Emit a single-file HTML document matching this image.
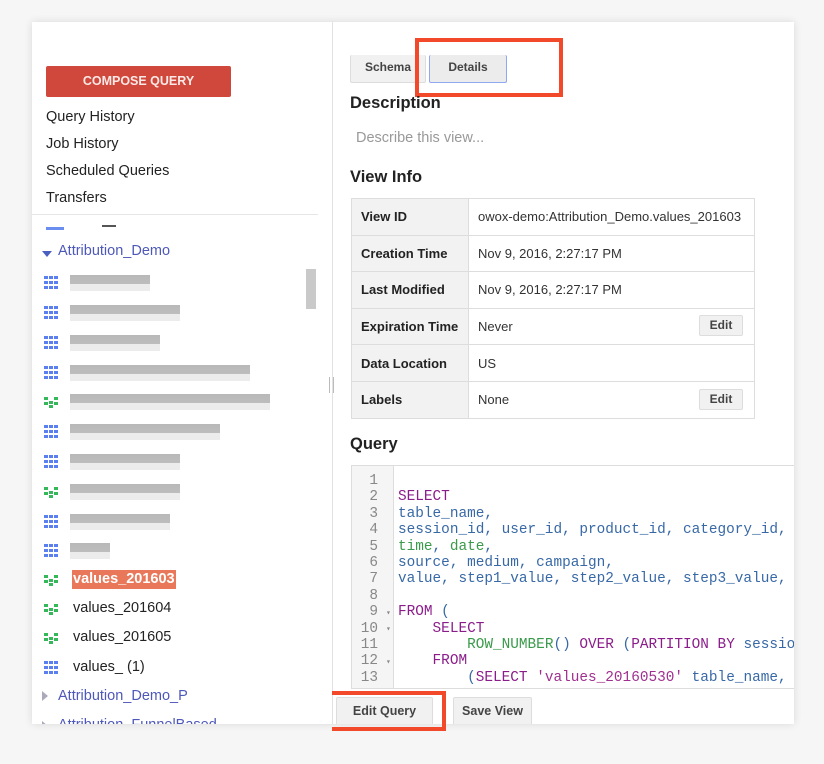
<!DOCTYPE html>
<html><head><style>
*{margin:0;padding:0;box-sizing:border-box}
body{width:824px;height:764px;background:#f6f6f6;font-family:"Liberation Sans",sans-serif;position:relative;overflow:hidden}
.card{position:absolute;left:32px;top:22px;width:762px;height:702px;background:#fff;box-shadow:0 0 8px rgba(0,0,0,.12);overflow:hidden}
.a{position:absolute;white-space:nowrap}
.btn{position:absolute;background:#f1f1f1;border:1px solid #ddd;border-radius:2px;font-weight:bold;font-size:12px;color:#444;text-align:center}
.nav{position:absolute;left:14px;font-size:14.5px;color:#222}
.row{position:absolute;left:12px;height:20px;font-size:14.5px;color:#222;white-space:nowrap}
.ic{position:absolute;left:0;top:3px;width:16px;height:13px}
.blur{position:absolute;left:26px;top:2px;height:16px;background:linear-gradient(#b8b8b8 0,#bdbdbd 55%,#ececec 55%)}
table{border-collapse:collapse;position:absolute;left:319px;top:176px;width:404px;font-size:13px}
td{border:1px solid #ddd;height:36.6px;padding-left:9px;color:#333}
td.l{background:#f2f2f2;font-weight:bold;width:117px;color:#222}
.code{position:absolute;left:319px;top:443px;width:450px;height:224px;border:1px solid #ddd;font-family:"Liberation Mono",monospace;font-size:14.4px;line-height:16.4px;overflow:hidden}
.gut{position:absolute;left:0;top:0;width:42px;height:100%;background:#f5f5f5;border-right:1px solid #ddd;color:#888;text-align:right;padding:7px 15px 0 0}
.src{position:absolute;left:46px;top:7px;white-space:pre;color:#3869a6}
.k{color:#8b1d8b}.g{color:#3a9a4a}.s{color:#a0308f}
</style></head><body>
<div class="card">
 <div class="a" style="left:14px;top:44px;width:185px;height:31px;background:#d0483b;border-radius:2px;color:#fbe9e7;font-weight:bold;font-size:12.5px;text-align:center;line-height:31px">COMPOSE QUERY</div>
 <div class="nav" style="top:87px">Query History</div>
 <div class="nav" style="top:114px">Job History</div>
 <div class="nav" style="top:141px">Scheduled Queries</div>
 <div class="nav" style="top:168px">Transfers</div>
 <div class="a" style="left:0;top:192px;width:286px;height:1px;background:#e6e6e6"></div>
 <div class="a" style="left:14px;top:205px;width:18px;height:3px;background:#6a8ef0"></div>
 <div class="a" style="left:70px;top:203px;width:14px;height:2px;background:#555"></div>
 <div class="a" style="left:10px;top:229px;width:0;height:0;border-left:5px solid transparent;border-right:5px solid transparent;border-top:6px solid #4a5fc0"></div>
 <div class="a" style="left:26px;top:221px;font-size:14.5px;color:#4e58b9">Attribution_Demo</div>
 <div class="a" style="left:274px;top:247px;width:10px;height:40px;background:#c9c9c9"></div>
 <div class="a" style="left:300px;top:0;width:1px;height:702px;background:#e2e2e2"></div>
 <div class="a" style="left:297px;top:355px;width:5px;height:16px;border-left:1px solid #bbb;border-right:1px solid #bbb"></div>
 <div class="row" style="top:251px"><svg class="ic"><use href="#gr"/></svg><div class="blur" style="width:80px"></div></div>
 <div class="row" style="top:281px"><svg class="ic"><use href="#gr"/></svg><div class="blur" style="width:110px"></div></div>
 <div class="row" style="top:311px"><svg class="ic"><use href="#gr"/></svg><div class="blur" style="width:90px"></div></div>
 <div class="row" style="top:341px"><svg class="ic"><use href="#gr"/></svg><div class="blur" style="width:180px"></div></div>
 <div class="row" style="top:370px"><svg class="ic"><use href="#gv"/></svg><div class="blur" style="width:200px"></div></div>
 <div class="row" style="top:400px"><svg class="ic"><use href="#gr"/></svg><div class="blur" style="width:150px"></div></div>
 <div class="row" style="top:430px"><svg class="ic"><use href="#gr"/></svg><div class="blur" style="width:110px"></div></div>
 <div class="row" style="top:460px"><svg class="ic"><use href="#gv"/></svg><div class="blur" style="width:110px"></div></div>
 <div class="row" style="top:490px"><svg class="ic"><use href="#gr"/></svg><div class="blur" style="width:100px"></div></div>
 <div class="row" style="top:519px"><svg class="ic"><use href="#gr"/></svg><div class="blur" style="width:40px"></div></div>
 <div class="row" style="top:548px"><svg class="ic"><use href="#gv"/></svg><span class="a" style="left:28px;top:0;background:#e9785a;color:#fff;font-weight:bold;padding:0 1px;line-height:19px">values_201603</span></div>
 <div class="row" style="top:577px"><svg class="ic"><use href="#gv"/></svg><span class="a" style="left:29px;top:1px">values_201604</span></div>
 <div class="row" style="top:606px"><svg class="ic"><use href="#gv"/></svg><span class="a" style="left:29px;top:1px">values_201605</span></div>
 <div class="row" style="top:636px"><svg class="ic"><use href="#gr"/></svg><span class="a" style="left:29px;top:1px">values_ (1)</span></div>
 <div class="a" style="left:10px;top:669px;border-top:5px solid transparent;border-bottom:5px solid transparent;border-left:6px solid #aab"></div>
 <div class="a" style="left:26px;top:666px;font-size:14.5px;color:#4e58b9">Attribution_Demo_P</div>
 <div class="a" style="left:10px;top:699px;border-top:5px solid transparent;border-bottom:5px solid transparent;border-left:6px solid #aab"></div>
 <div class="a" style="left:26px;top:695px;font-size:14.5px;color:#4e58b9">Attribution_FunnelBased</div>
 <svg width="0" height="0" style="position:absolute"><defs>
  <g id="gr" fill="#5b7fef"><rect x="0" y="0" width="4" height="3"/><rect x="5" y="0" width="4" height="3"/><rect x="10" y="0" width="4" height="3"/><rect x="0" y="5" width="4" height="3"/><rect x="5" y="5" width="4" height="3"/><rect x="10" y="5" width="4" height="3"/><rect x="0" y="10" width="4" height="3"/><rect x="5" y="10" width="4" height="3"/><rect x="10" y="10" width="4" height="3"/></g>
  <g id="gv" fill="#35b85a"><rect x="0" y="2" width="4" height="3"/><rect x="0" y="7" width="4" height="3"/><rect x="10" y="2" width="4" height="3"/><rect x="10" y="7" width="4" height="3"/><rect x="5" y="6" width="4" height="3"/><rect x="5" y="10" width="4" height="3"/></g>
 </defs></svg>
 <div class="btn" style="left:318px;top:33px;width:76px;height:28px;line-height:24px;border-top:none">Schema</div>
 <div class="btn" style="left:397px;top:33px;width:78px;height:28px;line-height:24px;border:1px solid #8fa8f0;border-top:none;background:#ececec">Details</div>
 <div class="a" style="left:383px;top:16px;width:148px;height:59px;border:4px solid #f3492b"></div>
 <div class="a" style="left:318px;top:72px;font-size:16.5px;font-weight:bold;color:#222">Description</div>
 <div class="a" style="left:324px;top:108px;font-size:14.5px;color:#999">Describe this view...</div>
 <div class="a" style="left:318px;top:146px;font-size:16.5px;font-weight:bold;color:#222">View Info</div>
 <table>
  <tr><td class="l">View ID</td><td>owox-demo:Attribution_Demo.values_201603</td></tr>
  <tr><td class="l">Creation Time</td><td>Nov 9, 2016, 2:27:17 PM</td></tr>
  <tr><td class="l">Last Modified</td><td>Nov 9, 2016, 2:27:17 PM</td></tr>
  <tr><td class="l">Expiration Time</td><td>Never</td></tr>
  <tr><td class="l">Data Location</td><td>US</td></tr>
  <tr><td class="l">Labels</td><td>None</td></tr>
 </table>
 <div class="btn" style="left:667px;top:293px;width:44px;height:21px;line-height:19px">Edit</div>
 <div class="btn" style="left:667px;top:367px;width:44px;height:21px;line-height:19px">Edit</div>
 <div class="a" style="left:318px;top:413px;font-size:16.5px;font-weight:bold;color:#222">Query</div>
 <div class="code">
  <div class="gut">1<br>2<br>3<br>4<br>5<br>6<br>7<br>8<br>9<br>10<br>11<br>12<br>13</div>
  <div class="a" style="left:34px;top:140px;font-size:8px;color:#888;line-height:16.4px">▾<br>▾<br><br>▾</div>
  <div class="src">
<span class="k">SELECT</span>
table_name,
session_id, user_id, product_id, category_id,
<span class="g">time</span>, <span class="g">date</span>,
source, medium, campaign,
value, step1_value, step2_value, step3_value,

<span class="k">FROM</span> (
    <span class="k">SELECT</span>
        <span class="g">ROW_NUMBER</span>() <span class="k">OVER</span> (<span class="k">PARTITION BY</span> sessio
    <span class="k">FROM</span>
        (<span class="k">SELECT</span> <span class="s">'values_20160530'</span> table_name,</div>
 </div>
 <div class="btn" style="left:304px;top:675px;width:97px;height:30px;line-height:27px;font-size:12.5px;border-bottom:none">Edit Query</div>
 <div class="btn" style="left:421px;top:675px;width:79px;height:30px;line-height:27px;font-size:12.5px;border-bottom:none">Save View</div>
</div>
<div class="a" style="left:332px;top:691px;width:114px;height:40px;border:4px solid #f3492b;border-left:none"></div>
</body></html>
